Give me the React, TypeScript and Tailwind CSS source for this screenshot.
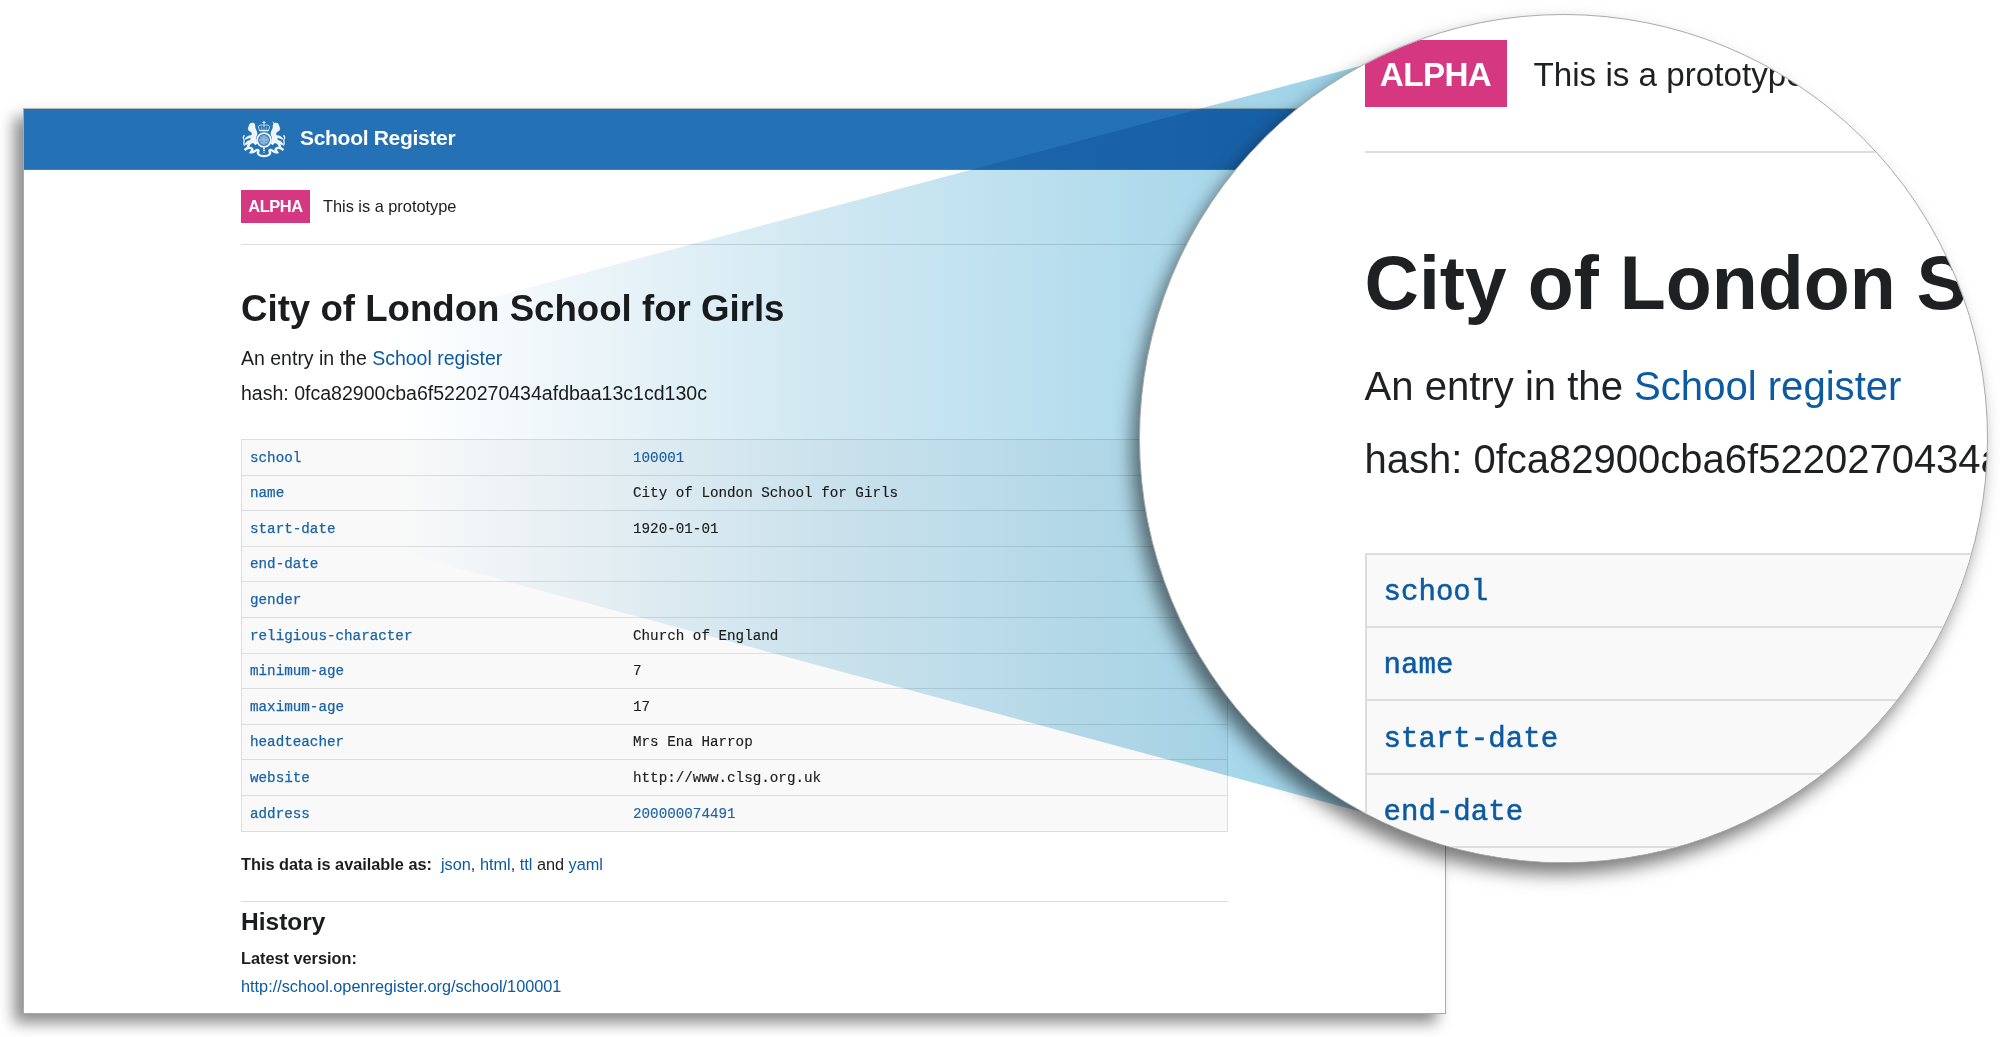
import React from "react";

const LINK = "text-[#0b5aa2]";

const ROWS: { field: string; value: string; link?: boolean }[] = [
  { field: "school", value: "100001", link: true },
  { field: "name", value: "City of London School for Girls" },
  { field: "start-date", value: "1920-01-01" },
  { field: "end-date", value: "" },
  { field: "gender", value: "" },
  { field: "religious-character", value: "Church of England" },
  { field: "minimum-age", value: "7" },
  { field: "maximum-age", value: "17" },
  { field: "headteacher", value: "Mrs Ena Harrop" },
  { field: "website", value: "http://www.clsg.org.uk" },
  { field: "address", value: "200000074491", link: true },
];

function Supporter() {
  return (
    <g>
      <path d="M7.500 3c1.500-1.600 4.500-1.500 5.400.2.600 1.200.1 2.700.6 4.100.7 2 2.100 3.600 1.800 6-.2 1.600-1.300 2.600-1.300 4l1.200 5.300-1.600 1.700-2.500-2.400-2.400 1-1.300 2.800-3.100 1.600.4-1.700 1-2.300-2.300.9-1-1.200 3.200-3.200 2.500-.7.600-2-2.700.5-2.400 1.200-.8-1.600 3.400-2.400 3.600-.9-.3-2.300L6.700 9.800l-.9-2.400z" />
      <path d="M2.500 24.500C.3 22.500 3.200 20.500 2 18.300 1 17 1 15.500 2.600 14.400" fill="none" stroke="currentColor" strokeWidth="1.300" />
    </g>
  );
}

function Crest() {
  return (
    <svg viewBox="0 0 44 37" className="h-[37px] w-[44px] text-[#eef5fb]" fill="currentColor">
      <Supporter />
      <g transform="matrix(-1 0 0 1 44 0)">
        <Supporter />
      </g>
      <path d="M34.500 5.500 30.800.8" stroke="currentColor" strokeWidth="1" />
      {/* crown */}
      <path d="M22 0v4M20.600 1.500h2.800" stroke="currentColor" strokeWidth="1" />
      <path d="M17.600 9.800 16.300 5.600C17 3.600 20.400 3.400 22 5c1.600-1.600 5-1.400 5.700.6l-1.300 4.200z" fill="none" stroke="currentColor" strokeWidth="1" opacity=".8" />
      <path d="M22 4.500v4.500M19.400 5.500l.5 3.500M24.600 5.500l-.5 3.500" stroke="currentColor" strokeWidth=".7" opacity=".7" />
      <path d="M17.500 8.900h9v1.200h-9z" opacity=".9" />
      {/* shield inside the garter */}
      <circle cx="22" cy="19" r="6.900" fill="none" stroke="currentColor" strokeWidth="1.900" />
      <circle cx="22" cy="19" r="5" opacity=".35" />
      <path d="M22 14v10M17 19h10M18.800 16l2 1.500M23.500 16.500l2.200.9M18.900 21.200l2 1M23.500 21.200l1.900.6" stroke="currentColor" strokeWidth=".9" opacity=".5" />
      <path d="M22 26.500v5" stroke="currentColor" strokeWidth="1.800" strokeDasharray="1.400 .7" />
      {/* motto scroll */}
      <path
        d="M2.500 29c2.200-1.800 5.600-2.500 7.300-1.600 1.300.8.100 2.300-1 3.900 3 .9 5.300-3.200 7.300-2.200 1.500.9-1.300 2.300.2 4 1.100 1.500 3.200 2 5.700 2s4.600-.5 5.700-2c1.500-1.700-1.300-3.100.2-4 2-1 4.300 3.100 7.300 2.200-1.100-1.600-2.300-3.100-1-3.900 1.700-.9 5.100-.2 7.300 1.600"
        fill="none"
        stroke="currentColor"
        strokeWidth="2.300"
      />
    </svg>
  );
}

function RegisterPage() {
  return (
    <div className="ml-[23px] h-[906px] w-[1423px] border border-[#a9a9a9] border-t-[#bdb9b5] bg-white shadow-[-9px_9px_14px_rgba(0,0,0,0.45)]">
      <header className="flex h-[61px] border-b border-[#3a80bf] bg-[#2472b5] pt-[12px] pl-[218px]">
        <Crest />
        <span className="mt-[5px] ml-[14px] text-[21px] leading-[24px] font-bold tracking-[-0.300px] text-white">School Register</span>
      </header>
      <main className="ml-[217px] w-[987px] text-[#1b1c1d]">
        <div className="flex h-[75px] items-start border-b border-[#dcdedf] pt-[20px] text-[16.400px]">
          <span className="flex h-[33px] w-[69px] items-center justify-center bg-[#d53880] font-bold tracking-[-0.400px] text-white">ALPHA</span>
          <span className="ml-[13px] flex h-[33px] items-center tracking-[-0.030px]">This is a prototype</span>
        </div>
        <div className="h-[20px]" />
        <h1 className="mt-[23px] text-[36.650px] leading-[41px] font-bold">City of London School for Girls</h1>
        <p className="mt-[12px] text-[19.500px] leading-[35px]">
          An entry in the <a className={LINK}>School register</a>
        </p>
        <p className="text-[19.550px] leading-[35px]">hash: 0fca82900cba6f5220270434afdbaa13c1cd130c</p>
        <div className="mt-[28px] border border-t-0 border-[#dcdedf] bg-[#f9f9f9] font-['Liberation_Mono',monospace] text-[14.250px]">
          {ROWS.map((r) => (
            <div key={r.field} className="flex h-[35.600px] items-center border-t border-[#dcdedf] pt-[2px] pl-[8px]">
              <span className="w-[383px] text-[#1a63a6] [-webkit-text-stroke:0.250px_#1a63a6]">{r.field}</span>
              <span className={r.link ? "text-[#1a63a6] [-webkit-text-stroke:0.150px_#1a63a6]" : "[-webkit-text-stroke:0.150px_#1b1c1d]"}>{r.value}</span>
            </div>
          ))}
        </div>
        <p className="mt-[20px] text-[16.300px] leading-[24px]">
          <b className="mr-[9px]">This data is available as:</b>
          <a className={LINK}>json</a>, <a className={LINK}>html</a>, <a className={LINK}>ttl</a> and <a className={LINK}>yaml</a>
        </p>
        <div className="mt-[25px] border-t border-[#dcdedf]" />
        <h2 className="mt-[5px] text-[24.500px] leading-[30px] font-bold">History</h2>
        <p className="mt-[9px] text-[16.300px] leading-[24px] font-bold">Latest version:</p>
        <p className="mt-[4px] text-[16.300px] leading-[24px]">
          <a className={LINK}>http://school.openregister.org/school/100001</a>
        </p>
      </main>
    </div>
  );
}

function Beam() {
  return (
    <svg viewBox="0 0 2000 1037" className="absolute inset-0 h-[1037px] w-[2000px] mix-blend-multiply">
      <defs>
        <linearGradient id="beam" gradientUnits="userSpaceOnUse" x1="400" y1="0" x2="1400" y2="0">
          <stop offset="0" stopColor="#ffffff" />
          <stop offset=".2" stopColor="#eaf4f9" />
          <stop offset=".42" stopColor="#d0e8f2" />
          <stop offset=".6" stopColor="#bfe1ef" />
          <stop offset=".78" stopColor="#acd9eb" />
          <stop offset="1" stopColor="#98cfe7" />
        </linearGradient>
      </defs>
      <path d="M400 322 1364 65 1500 300V700L1364 812.500 400 552.500z" fill="url(#beam)" />
    </svg>
  );
}

function Lens() {
  return (
    <div className="absolute top-[14px] left-[1139px] h-[849px] w-[849px] overflow-hidden rounded-full border border-[#aaaaaa] bg-white text-[#1f2021] shadow-[-7px_11px_18px_rgba(0,0,0,0.52)]">
      <div className="ml-[224.500px] w-[760px] whitespace-nowrap">
        <div className="flex h-[138px] items-start border-b-2 border-[#dddddd] pt-[25px] text-[33.200px]">
          <span className="flex h-[67px] w-[142px] items-center justify-center bg-[#d53880] pt-[2px] font-bold tracking-[-0.600px] text-white">ALPHA</span>
          <span className="ml-[27px] flex h-[67px] items-center pt-[2px]">This is a prototype</span>
        </div>
        <h1 className="pt-[88px] text-[75.300px] leading-[84px] font-bold">City of London School for Girls</h1>
        <p className="mt-[25px] text-[40.100px] leading-[73px]">
          An entry in the <a className={LINK}>School register</a>
        </p>
        <p className="text-[40px] leading-[73px]">hash: 0fca82900cba6f5220270434afdbaa13c1cd130c</p>
        <div className="mt-[57px] border-l-2 border-[#dddddd] bg-[#f9f9f9] font-['Liberation_Mono',monospace] text-[29.100px]">
          {ROWS.slice(0, 5).map((r) => (
            <div key={r.field} className="flex h-[73.200px] items-center border-t-2 border-[#dddddd] pt-[5px] pl-[17px] text-[#0b5aa2] [-webkit-text-stroke:0.500px_#0b5aa2]">
              {r.field}
            </div>
          ))}
        </div>
      </div>
    </div>
  );
}

export default function App() {
  return (
    <div className="relative isolate h-[1037px] w-[2000px] overflow-hidden bg-white pt-[108px] font-['Liberation_Sans',Arial,sans-serif]">
      <RegisterPage />
      <Beam />
      <Lens />
    </div>
  );
}
